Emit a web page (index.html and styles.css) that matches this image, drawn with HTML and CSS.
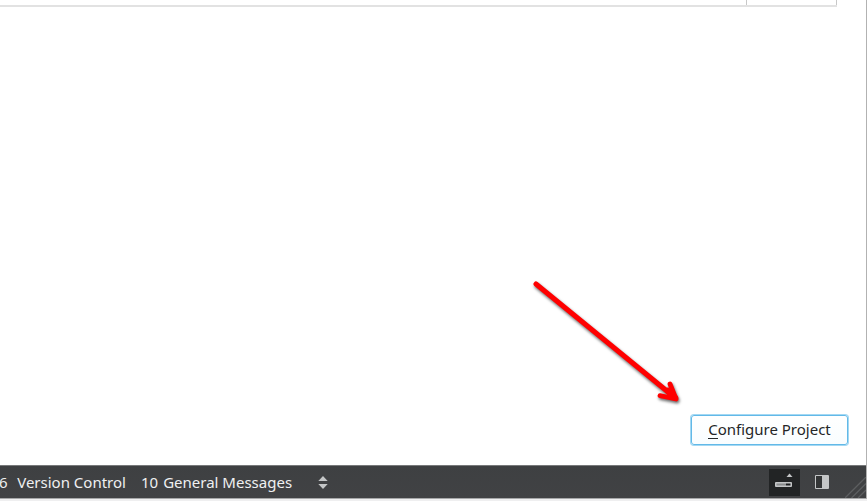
FILE: index.html
```
<!DOCTYPE html>
<html lang="en">
<head>
<meta charset="utf-8">
<title>Configure Project</title>
<link rel="stylesheet" href="styles.css">
</head>
<body>
<div class="window">
  <main class="content">
    <div class="table-edge"><span class="cell name"></span><span class="cell action"></span></div>
    <div class="actions"><button class="configure" type="button"><span class="mnemonic">C</span><span>onfigure Project</span></button></div>
    <svg class="arrow" width="180" height="145" viewBox="520 270 180 145">
      <g fill="none" stroke="#f00" stroke-linecap="round" stroke-linejoin="round">
        <path d="M536 284L673 396" stroke-width="5"/>
        <path d="M670 384L676 399L660 395.7" stroke-width="4.8"/>
        <path d="M668 391L675 397.7" stroke-width="6.4"/>
      </g>
    </svg>
  </main>
  <footer class="status">
    <span class="pane version"><span class="number">6</span><span>Version Control</span></span>
    <span class="pane messages"><span class="number">10</span><span>General Messages</span></span>
    <svg class="sorter" width="10" height="13" viewBox="0 0 10 13" fill="#c4c6c7"><path d="M5 0L9.7 5H.3zM.3 8H9.7L5 13z"/></svg>
    <span class="spacer"></span>
    <button class="output-toggle" type="button" aria-label="Toggle output pane">
      <svg width="31" height="27" viewBox="0 0 31 27"><path d="M17.5 8h6l-3-3.5z" fill="#c4c6c7"/><rect x="6" y="13" width="17" height="5" rx="1" fill="#c4c6c7"/><path d="M7.5 14.5H17v2H7.5z" fill="#898b8c"/><path d="M17 14.5h4.5v2H17z" fill="#1d1f20"/></svg>
    </button>
    <svg class="sidebar-toggle" width="14" height="14" viewBox="0 0 14 14"><path d="M.5.5h13v13H.5z" fill="#333536" stroke="#c4c6c7"/><path d="M7 1h6v12H7z" fill="#c4c6c7"/></svg>
    <svg class="grip" width="21" height="21" viewBox="0 0 21 21" stroke="#5c5e60" stroke-width="1.3"><path d="M0 21L21 0M6.5 21L21 6.5M13 21l8-8"/></svg>
  </footer>
</div>
</body>
</html>
```
FILE: styles.css
```
* { box-sizing: border-box; }
body { margin: 0; font-family: "Noto Sans", sans-serif; font-size: 15px; background: #efeff0; overflow: hidden; }
.window { width: 867px; height: 499px; border-right: 1px solid #b2b2b2; display: flex; flex-direction: column; }
.content { position: relative; flex: 1; background: #fff; display: flex; flex-direction: column; justify-content: space-between; }
.table-edge { display: flex; width: 837px; height: 7px; border-bottom: 2px solid #e2e2e2; }
.cell { border-right: 1px solid #c8c8c8; }
.name { width: 747px; }
.action { width: 90px; }
.actions { display: flex; justify-content: flex-end; padding: 0 18px 20px 0; }
.configure { display: flex; justify-content: center; width: 157px; height: 30px; border: 1px solid #62b9e8; box-shadow: 0 0 0 1px #a3d8f3; border-radius: 3px; background: linear-gradient(#fff, #f9fdff); color: #242628; font: inherit; line-height: 20px; padding: 3px 0 0; }
.mnemonic { height: 20px; border-bottom: 1px solid #242628; }
.arrow { position: absolute; left: 520px; top: 270px; filter: drop-shadow(1.5px 2px 1.5px rgb(0 0 0 / 60%)); }
.status { height: 34px; flex: none; display: flex; align-items: center; color: #eff0f1; background: linear-gradient(#3e4042, #414244); border-top: 1px solid #77797a; border-bottom: 1px solid #a7a8a9; line-height: 20px; white-space: nowrap; }
.pane { display: flex; }
.version { width: 141px; gap: 9.6px; }
.version .number { margin-left: -1px; }
.messages { width: 177px; gap: 5px; }
.sorter { flex: none; }
.spacer { flex: 1; }
.output-toggle { display: flex; width: 31px; height: 27px; padding: 0; border: 0; background: #222425; margin-right: 15px; }
.grip { align-self: flex-end; margin-left: 16px; }
```
